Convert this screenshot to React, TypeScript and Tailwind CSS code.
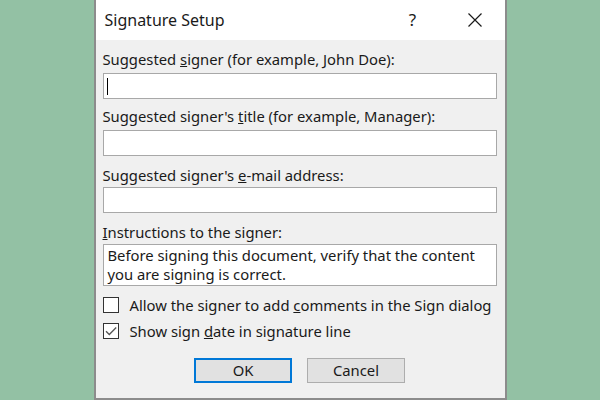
import React from "react";

function Field({ label, children }: { label: React.ReactNode; children: React.ReactNode }) {
  return (
    <div className="flex flex-col">
      <div className="h-[19px] leading-[19px]">{label}</div>
      {children}
    </div>
  );
}

function CheckRow({ checked, children }: { checked?: boolean; children: React.ReactNode }) {
  return (
    <div className="flex items-center h-[16px]">
      <span className="w-[16px] h-[16px] border border-[#333333] bg-white flex items-center justify-center shrink-0">
        {checked && (
          <svg width="14" height="14" viewBox="0 0 14 14" fill="none">
            <path d="M2 7.2l3.3 3.3L12.2 3.5" stroke="#555555" strokeWidth="1.3" />
          </svg>
        )}
      </span>
      <span className="ml-[11px] leading-[19px] whitespace-nowrap">{children}</span>
    </div>
  );
}

export default function App() {
  return (
    <div
      className="w-[600px] h-[400px] bg-[#93c1a4] flex justify-center text-[#1a1a1a] text-[14.8px]"
      style={{ fontFamily: '"Noto Sans", "Liberation Sans", sans-serif' }}
    >
      <div className="w-[413px] h-[400px] border-x-2 border-b-2 border-[#8c8c8c] bg-[#f0f0f0] flex flex-col">
        {/* Title bar */}
        <div className="h-[40px] bg-white flex items-center pl-[9px] shrink-0">
          <span className="text-[16px] flex-1">Signature Setup</span>
          <span className="text-[17px] w-[20px] text-center mr-[44px]">?</span>
          <svg className="mr-[22px]" width="16" height="16" viewBox="0 0 16 16" fill="none">
            <path d="M1.5 1.5l13 13M14.5 1.5l-13 13" stroke="#1a1a1a" strokeWidth="1.2" />
          </svg>
        </div>

        {/* Body */}
        <div className="flex flex-col pl-[7px] pr-[8px] pt-[10px]">
          <Field label={<>Suggested <u>s</u>igner (for example, John Doe):</>}>
            <div className="mt-[4px] h-[26px] bg-white border border-[#a8a8a8] flex items-center pl-[3px]">
              <span className="w-[1px] h-[17px] bg-black" />
            </div>
          </Field>
          <div className="mt-[8px]">
            <Field label={<>Suggested signer's <u>t</u>itle (for example, Manager):</>}>
              <div className="mt-[4px] h-[26px] bg-white border border-[#a8a8a8]" />
            </Field>
          </div>
          <div className="mt-[10px]">
            <Field label={<>Suggested signer's <u>e</u>-mail address:</>}>
              <div className="mt-[2px] h-[26px] bg-white border border-[#a8a8a8]" />
            </Field>
          </div>
          <div className="mt-[10px]">
            <Field label={<><u>I</u>nstructions to the signer:</>}>
              <div className="mt-[2px] h-[42px] bg-white border border-[#a8a8a8] px-[4px] pt-[1px] leading-[19px]">
                Before signing this document, verify that the content you are signing is correct.
              </div>
            </Field>
          </div>

          <div className="flex flex-col gap-[10px] mt-[11px]">
            <CheckRow>
              Allow the signer to add <u>c</u>omments in the Sign dialog
            </CheckRow>
            <CheckRow checked>
              Show sign <u>d</u>ate in signature line
            </CheckRow>
          </div>

          <div className="flex justify-center gap-[15px] mt-[19px]">
            <button className="w-[98px] h-[25px] bg-[#e1e1e1] border-2 border-[#0078d7] flex items-center justify-center">
              OK
            </button>
            <button className="w-[98px] h-[25px] bg-[#e1e1e1] border border-[#adadad] flex items-center justify-center">
              Cancel
            </button>
          </div>
        </div>
      </div>
    </div>
  );
}
